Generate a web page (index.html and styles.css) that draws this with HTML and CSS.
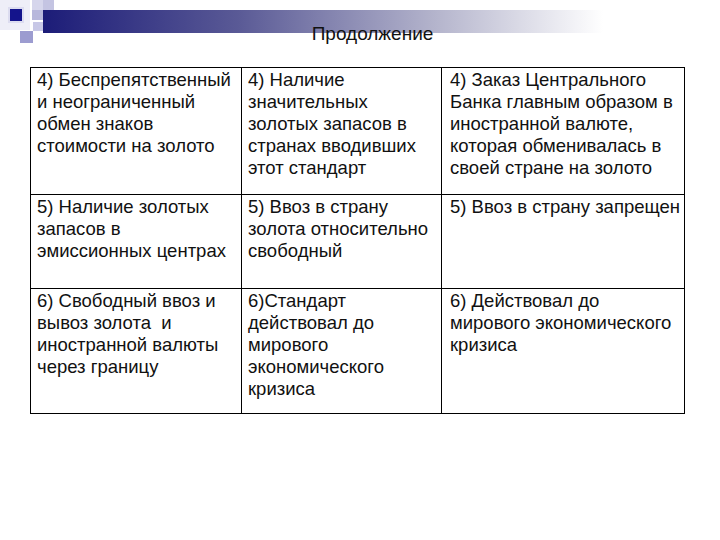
FILE: index.html
```html
<!DOCTYPE html>
<html lang="ru">
<head>
<meta charset="utf-8">
<title>Продолжение</title>
<link rel="stylesheet" href="styles.css">
</head>
<body>
<header class="head">
  <svg class="deco" width="720" height="46" viewBox="0 0 720 46" xmlns="http://www.w3.org/2000/svg">
    <defs>
      <linearGradient id="bar" x1="0" y1="0" x2="1" y2="0">
        <stop offset="0" stop-color="#1c1c78"/>
        <stop offset="0.35" stop-color="#5a5a96"/>
        <stop offset="0.7" stop-color="#b4b4cc"/>
        <stop offset="1" stop-color="#ffffff"/>
      </linearGradient>
    </defs>
    <rect x="0" y="0" width="30" height="30" fill="#eeeef8"/>
    <rect x="32" y="0" width="22" height="20" fill="#d6d6ec"/>
    <rect x="43" y="10" width="560" height="23" fill="url(#bar)"/>
    <rect x="43" y="0" width="11" height="10" fill="#c4c4e2"/>
    <rect x="32" y="10" width="11" height="10" fill="#b8b8dc"/>
    <rect x="8" y="7" width="16" height="16" fill="#dcdcf0"/>
    <rect x="10" y="9" width="12" height="12" fill="#14148c"/>
    <rect x="20" y="31" width="13" height="12" fill="#9c9cd0"/>
    <rect x="33" y="22" width="10" height="9" fill="#c8c8e6"/>
  </svg>
  <h1 class="title">Продолжение</h1>
</header>
<main class="wrap">
  <table class="grid">
    <colgroup>
      <col class="c1"><col class="c2"><col class="c3">
    </colgroup>
    <tr class="r1">
      <td>4) Беспрепятственный и неограниченный обмен знаков стоимости на золото</td>
      <td>4) Наличие значительных золотых запасов в странах вводивших этот стандарт</td>
      <td>4) Заказ Центрального Банка главным образом в иностранной валюте, которая обменивалась в своей стране на золото</td>
    </tr>
    <tr class="r2">
      <td>5) Наличие золотых запасов в эмиссионных центрах</td>
      <td>5) Ввоз в страну золота относительно свободный</td>
      <td>5) Ввоз в страну запрещен</td>
    </tr>
    <tr class="r3">
      <td>6) Свободный ввоз и вывоз золота&nbsp; и иностранной валюты через границу</td>
      <td>6)Стандарт действовал до мирового экономического кризиса</td>
      <td>6) Действовал до мирового экономического кризиса</td>
    </tr>
  </table>
</main>
</body>
</html>
```

FILE: styles.css
```css
html, body {
  margin: 0;
  padding: 0;
  background: #ffffff;
}
body {
  width: 720px;
  height: 540px;
  overflow: hidden;
  font-family: "Liberation Sans", Arial, sans-serif;
  color: #111;
}
.head {
  position: relative;
  height: 46px;
}
.deco {
  display: block;
}
.title {
  position: absolute;
  left: 0;
  right: 0;
  top: 23px;
  margin: 0;
  padding-left: 25px;
  text-align: center;
  font-weight: normal;
  font-size: 19px;
  line-height: 22px;
  color: #111;
}
.wrap {
  padding: 21px 0 0 30px;
}
.grid {
  border-collapse: collapse;
  table-layout: fixed;
  width: 654px;
}
.c1 { width: 211px; }
.c2 { width: 200px; }
.c3 { width: 243px; }
.grid td {
  border: 1px solid #000;
  vertical-align: top;
  padding: 1px 4px 0 6px;
  font-size: 18.5px;
  line-height: 22px;
  color: #111;
}
.grid td + td + td {
  padding-left: 8px;
  padding-right: 2px;
}
.r1 td { height: 125px; }
.r2 td { height: 92px; }
.r3 td { height: 123px; }
```
